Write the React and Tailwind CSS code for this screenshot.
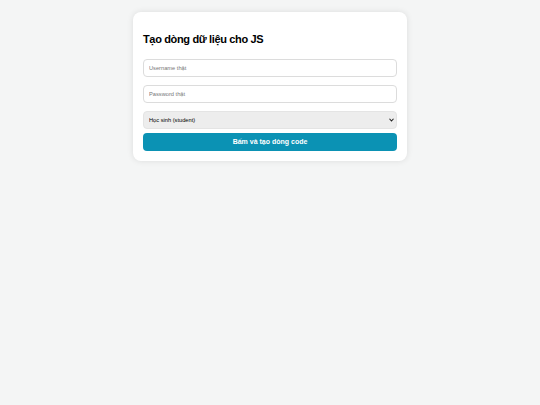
import React, { useState } from 'react';

export default function App() {
  const [username, setUsername] = useState('');
  const [password, setPassword] = useState('');
  const [role, setRole] = useState('student');

  return (
    <div className="min-h-[405px] w-full bg-[#f4f5f5] pt-3" style={{ fontFamily: '"Liberation Sans", Arial, sans-serif' }}>
      <div className="mx-auto w-[274px] rounded-lg bg-white px-[10px] pt-[20px] pb-[10px] shadow-[0_0_6px_rgba(0,0,0,0.1)]">
        <h1 className="mb-[13px] text-[11px] font-bold leading-[14px] tracking-[-0.35px] text-black">Tạo dòng dữ liệu cho JS</h1>

        {/* Username */}
        <input
          type="text"
          placeholder="Username thật"
          value={username}
          onChange={e => setUsername(e.target.value)}
          className="block h-[18px] w-full rounded-[4px] border border-[#dcdcdc] px-[5px] text-[5.7px] text-black outline-none placeholder:text-[#777]"
        />

        {/* Password */}
        <input
          type="password"
          placeholder="Password thật"
          value={password}
          onChange={e => setPassword(e.target.value)}
          className="mt-[8px] block h-[18px] w-full rounded-[4px] border border-[#dcdcdc] px-[5px] text-[5.7px] text-black outline-none placeholder:text-[#777]"
        />

        {/* Role */}
        <div className="relative mt-[8px]">
          <select
            value={role}
            onChange={e => setRole(e.target.value)}
            className="block h-[18px] w-full appearance-none rounded-[4px] border border-[#e4e4e4] bg-[#ededed] px-[5px] text-[5.7px] text-black outline-none"
          >
            <option value="student">Học sinh (student)</option>
            <option value="teacher">Giáo viên (teacher)</option>
          </select>
          <svg className="pointer-events-none absolute right-[3px] top-[7px] h-[4px] w-[5px]" viewBox="0 0 10 8">
            <path d="M1 1.5 L5 6 L9 1.5" fill="none" stroke="#222" strokeWidth="2.2" />
          </svg>
        </div>

        {/* Submit */}
        <button
          type="button"
          className="mt-[4px] block h-[18px] w-full rounded-[4px] bg-[#0b92b4] text-[7px] font-bold text-white"
        >
          Bấm và tạo dòng code
        </button>
      </div>
    </div>
  );
}
